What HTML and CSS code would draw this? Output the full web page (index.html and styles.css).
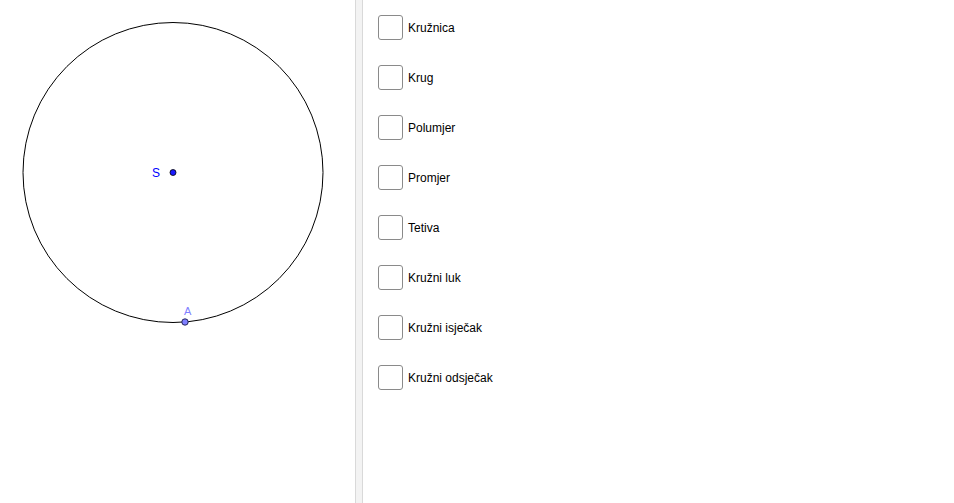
FILE: index.html
```html
<!DOCTYPE html>
<html>
<head>
<meta charset="utf-8">
<link rel="stylesheet" href="styles.css">
</head>
<body>
<div class="app">
  <div class="graphics">
    <svg class="canvas" width="355" height="503" viewBox="0 0 355 503">
      <circle cx="173" cy="172.5" r="150" fill="none" stroke="#000" stroke-width="1"/>
      <circle cx="173" cy="172.5" r="3" fill="#1a1aff" stroke="#000" stroke-width="0.8"/>
      <text x="152" y="177" class="lbl-s">S</text>
      <circle cx="185" cy="322" r="3.2" fill="#7f7fff" stroke="#1a1a4d" stroke-width="0.9"/>
      <text x="184" y="315" class="lbl-a">A</text>
    </svg>
  </div>
  <div class="divider"></div>
  <div class="panel">
    <label class="row"><span class="box"></span><span class="txt">Kružnica</span></label>
    <label class="row"><span class="box"></span><span class="txt">Krug</span></label>
    <label class="row"><span class="box"></span><span class="txt">Polumjer</span></label>
    <label class="row"><span class="box"></span><span class="txt">Promjer</span></label>
    <label class="row"><span class="box"></span><span class="txt">Tetiva</span></label>
    <label class="row"><span class="box"></span><span class="txt">Kružni luk</span></label>
    <label class="row"><span class="box"></span><span class="txt">Kružni isječak</span></label>
    <label class="row"><span class="box"></span><span class="txt">Kružni odsječak</span></label>
  </div>
</div>
</body>
</html>
```
FILE: styles.css
```css
html, body {
  margin: 0;
  padding: 0;
  background: #fff;
  font-family: "Liberation Sans", Arial, sans-serif;
}
.app {
  display: flex;
  width: 954px;
  height: 503px;
  overflow: hidden;
}
.graphics {
  width: 355px;
  flex: none;
}
.canvas {
  display: block;
}
.lbl-s {
  font-family: "Liberation Sans", Arial, sans-serif;
  font-size: 12px;
  fill: #0000ff;
}
.lbl-a {
  font-family: "Liberation Sans", Arial, sans-serif;
  font-size: 11px;
  fill: #7f7fff;
}
.divider {
  width: 6px;
  flex: none;
  background: #f3f3f3;
  border-left: 1px solid #d9d9d9;
  border-right: 1px solid #d9d9d9;
}
.panel {
  flex: 1;
  display: flex;
  flex-direction: column;
  gap: 24px;
  padding: 14px 0 0 15px;
}
.row {
  display: flex;
  align-items: center;
  height: 26px;
}
.box {
  width: 23px;
  height: 23px;
  border: 1.5px solid #8a8a8a;
  border-radius: 3px;
  background: #fff;
  flex: none;
}
.txt {
  margin-left: 5px;
  font-size: 12px;
  color: #000;
  padding-top: 2px;
}
```
